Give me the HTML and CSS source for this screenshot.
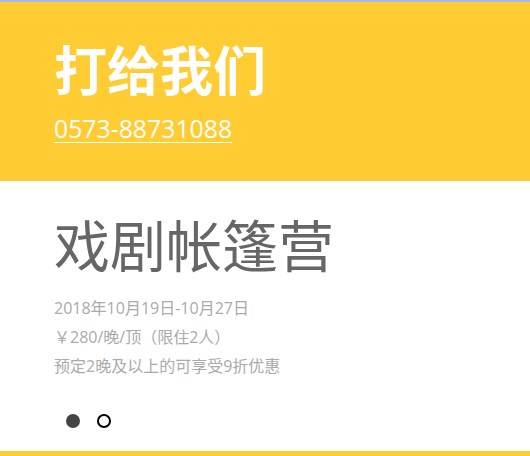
FILE: index.html
```html
<!DOCTYPE html>
<html lang="zh-CN">
<head>
<meta charset="utf-8">
<link rel="stylesheet" href="styles.css">
</head>
<body>
<div class="topline"></div>
<section class="call">
  <h2 class="call-title">打给我们</h2>
  <a class="call-phone" href="#">0573-88731088</a>
</section>
<section class="event">
  <h1 class="event-title">戏剧帐篷营</h1>
  <p class="event-line">2018年10月19日-10月27日</p>
  <p class="event-line">￥280/晚/顶（限住2人）</p>
  <p class="event-line">预定2晚及以上的可享受9折优惠</p>
  <div class="dots">
    <span class="dot dot-active"></span>
    <span class="dot"></span>
  </div>
</section>
</body>
</html>
```
FILE: styles.css
```css
html, body {
  margin: 0;
  padding: 0;
  background: #fff;
  font-family: "Open Sans", "Noto Sans CJK SC", sans-serif;
}
body {
  width: 530px;
  height: 456px;
  overflow: hidden;
}
.topline {
  height: 2px;
  background: #a6b6f2;
}
.call {
  background: #ffcc33;
  height: 179px;
  padding: 0 0 0 54px;
  box-sizing: border-box;
  display: flex;
  flex-direction: column;
  align-items: flex-start;
}
.call-title {
  margin: 30px 0 0;
  font-family: "Noto Sans CJK SC", sans-serif;
  font-weight: 700;
  font-size: 53px;
  line-height: 72px;
  color: #fff;
}
.call-phone {
  margin-top: 8px;
  color: #fff;
  font-size: 24.8px;
  line-height: 32px;
  text-decoration: underline;
  text-underline-offset: 4px;
  text-decoration-thickness: 1px;
}
.event {
  height: 275px;
  box-sizing: border-box;
  border-bottom: 5px solid #ffcc33;
  padding: 22px 0 0 54px;
}
.event-title {
  margin: 0 0 12px;
  font-family: "Noto Sans CJK SC", sans-serif;
  font-weight: 400;
  font-size: 56px;
  line-height: 80px;
  color: #666;
}
.event-line {
  margin: 0;
  font-size: 16px;
  line-height: 29px;
  color: #aaa;
}
.event-line:first-of-type {
  margin-top: -1px;
}
.dots {
  display: flex;
  gap: 17px;
  margin: 33px 0 0 12px;
}
.dot {
  width: 14px;
  height: 14px;
  box-sizing: border-box;
  border-radius: 50%;
  border: 2px solid #000;
}
.dot-active {
  background: #444;
  border-color: #444;
}
```
